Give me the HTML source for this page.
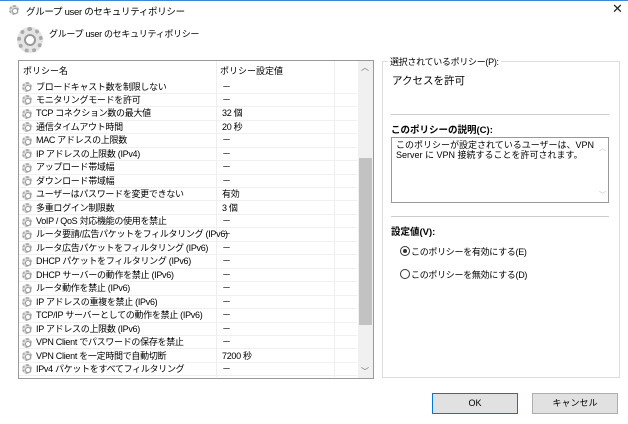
<!DOCTYPE html>
<html><head><meta charset="utf-8"><style>
*{margin:0;padding:0;box-sizing:border-box}
body{width:628px;height:424px;background:#fff;font-family:"Liberation Sans","Noto Sans CJK JP",sans-serif;font-size:9px;color:#000;position:relative;overflow:hidden}
.a{position:absolute;white-space:nowrap}
.gear{position:absolute;width:10px;height:10px;border-radius:50%;border:2px dotted #aaa;background:#ddd}
.gear:after{content:"";position:absolute;left:1px;top:1px;width:4px;height:4px;border-radius:50%;border:1px solid #999;background:#fff}
.row{position:absolute;left:19px;width:338px;height:13.4px;border-bottom:1px solid #f0f0f0}
.row span{position:absolute;top:0;line-height:13px;letter-spacing:-0.3px}
.n{left:17px}.v{left:203px}
.btn{position:absolute;height:21px;background:#e1e1e1;border:1px solid #adadad;text-align:center;line-height:19px;font-size:9px}
</style></head><body>
<div class="a" style="left:0;top:0;width:628px;height:1px;background:#3c8ad6"></div>
<div class="gear" style="left:9px;top:5px"></div>
<div class="a" style="left:26px;top:4px;font-size:9.5px;letter-spacing:-0.3px">グループ user のセキュリティポリシー</div>
<div class="a" style="left:612px;top:1px;font-size:13px;color:#222">✕</div>
<div class="a" style="left:17px;top:27px;width:26px;height:26px;border-radius:50%;border:4px dotted #aaa;background:#e4e4e4"></div>
<div class="a" style="left:24px;top:34px;width:12px;height:12px;border-radius:50%;border:2px solid #999;background:#fff"></div>
<div class="a" style="left:49px;top:27px;font-size:9px;letter-spacing:-0.3px">グループ user のセキュリティポリシー</div>

<div class="a" style="left:18px;top:60px;width:356px;height:319px;border:1px solid #999;background:#fff"></div>
<div class="a" style="left:216px;top:61px;width:1px;height:316px;background:#eee"></div>
<div class="a" style="left:334px;top:61px;width:1px;height:316px;background:#eee"></div>
<div class="a" style="left:23px;top:64px">ポリシー名</div>
<div class="a" style="left:220px;top:64px">ポリシー設定値</div>
<div class="a" style="left:358px;top:61px;width:15px;height:317px;background:#f0f0f0"></div>
<div class="a" style="left:361px;top:62px;font-size:8px;color:#666">︿</div>
<div class="a" style="left:361px;top:366px;font-size:8px;color:#666">﹀</div>
<div class="a" style="left:359px;top:158px;width:13px;height:167px;background:#c2c2c2"></div>

<div id="rows"></div>
<script>
var d=[["ブロードキャスト数を制限しない","－"],["モニタリングモードを許可","－"],["TCP コネクション数の最大値","32 個"],["通信タイムアウト時間","20 秒"],["MAC アドレスの上限数","－"],["IP アドレスの上限数 (IPv4)","－"],["アップロード帯域幅","－"],["ダウンロード帯域幅","－"],["ユーザーはパスワードを変更できない","有効"],["多重ログイン制限数","3 個"],["VoIP / QoS 対応機能の使用を禁止","－"],["ルータ要請/広告パケットをフィルタリング (IPv6)","－"],["ルータ広告パケットをフィルタリング (IPv6)","－"],["DHCP パケットをフィルタリング (IPv6)","－"],["DHCP サーバーの動作を禁止 (IPv6)","－"],["ルータ動作を禁止 (IPv6)","－"],["IP アドレスの重複を禁止 (IPv6)","－"],["TCP/IP サーバーとしての動作を禁止 (IPv6)","－"],["IP アドレスの上限数 (IPv6)","－"],["VPN Client でパスワードの保存を禁止","－"],["VPN Client を一定時間で自動切断","7200 秒"],["IPv4 パケットをすべてフィルタリング","－"]];
var h="";for(var i=0;i<d.length;i++){var t=80.5+i*13.45;h+='<div class="row" style="top:'+t+'px"><div class="gear" style="left:3px;top:1.5px"></div><span class="n">'+d[i][0]+'</span><span class="v">'+d[i][1]+'</span></div>';}
document.getElementById("rows").innerHTML=h;
</script>

<div class="a" style="left:382px;top:61px;width:238px;height:317px;border:1px solid #ddd"></div>
<div class="a" style="left:388px;top:55px;background:#fff;padding:0 2px;letter-spacing:-0.3px">選択されているポリシー(P):</div>
<div class="a" style="left:392px;top:73px;font-size:10.5px">アクセスを許可</div>
<div class="a" style="left:391px;top:114px;width:218px;height:1px;background:#ccc"></div>
<div class="a" style="left:391px;top:122px;font-weight:bold;font-size:9.5px">このポリシーの説明(C):</div>
<div class="a" style="left:391px;top:137px;width:218px;height:66px;border:1px solid #999"></div>
<div class="a" style="left:396px;top:140px;line-height:10px;font-size:9px">このポリシーが設定されているユーザーは、VPN<br>Server に VPN 接続することを許可されます。</div>
<div class="a" style="left:599px;top:143px;font-size:7px;color:#bbb">︿</div>
<div class="a" style="left:599px;top:190px;font-size:7px;color:#bbb">﹀</div>
<div class="a" style="left:391px;top:216px;width:218px;height:1px;background:#ccc"></div>
<div class="a" style="left:391px;top:224px;font-weight:bold;font-size:9.5px">設定値(V):</div>
<div class="a" style="left:400px;top:246px;width:10px;height:10px;border-radius:50%;border:1px solid #333"></div>
<div class="a" style="left:403px;top:249px;width:4px;height:4px;border-radius:50%;background:#333"></div>
<div class="a" style="left:411px;top:245px;letter-spacing:-0.3px">このポリシーを有効にする(E)</div>
<div class="a" style="left:400px;top:269px;width:10px;height:10px;border-radius:50%;border:1px solid #333"></div>
<div class="a" style="left:411px;top:268px;letter-spacing:-0.3px">このポリシーを無効にする(D)</div>

<div class="btn" style="left:432px;top:393px;width:86px;border:1px solid #0078d7">OK</div>
<div class="btn" style="left:532px;top:393px;width:86px">キャンセル</div>
</body></html>
